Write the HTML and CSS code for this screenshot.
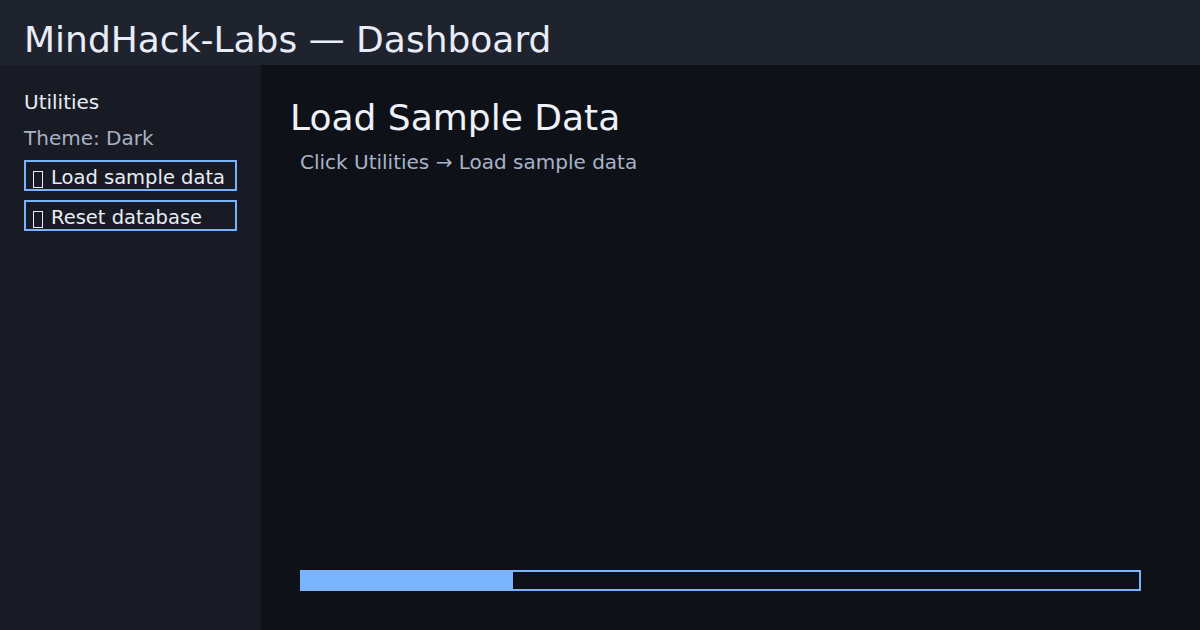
FILE: index.html
```html
<!DOCTYPE html>
<html lang="en">
<head>
<meta charset="utf-8">
<title>MindHack-Labs — Dashboard</title>
<link rel="stylesheet" href="styles.css">
</head>
<body>
<header class="topbar">
  <h1 class="brand">MindHack-Labs — Dashboard</h1>
</header>
<div class="layout">
  <aside class="sidebar">
    <div class="side-title">Utilities</div>
    <div class="side-meta">Theme: Dark</div>
    <button class="side-btn"><span class="glyph-box" aria-hidden="true"></span>Load sample data</button>
    <button class="side-btn"><span class="glyph-box" aria-hidden="true"></span>Reset database</button>
  </aside>
  <main class="content">
    <h2 class="page-title">Load Sample Data</h2>
    <p class="hint">Click Utilities → Load sample data</p>
    <div class="progress"><div class="progress-fill" style="width: 25.5%"></div></div>
  </main>
</div>
</body>
</html>
```

FILE: styles.css
```css
* { box-sizing: border-box; }
html, body {
  margin: 0;
  height: 100%;
}
body {
  font-family: "DejaVu Sans", sans-serif;
  background: #0e1118;
  color: #e8ecf5;
  display: flex;
  flex-direction: column;
  overflow: hidden;
}
.topbar {
  height: 65px;
  background: #1f232e;
  padding: 0 24px;
  display: flex;
  align-items: center;
  flex: none;
}
.brand {
  margin: 0;
  font-weight: normal;
  font-size: 36px;
  color: #e8ecf7;
  line-height: 1;
  padding-top: 14px;
}
.layout {
  flex: 1;
  display: flex;
  min-height: 0;
}
.sidebar {
  width: 261px;
  flex: none;
  background: #181b23;
  padding: 24px 24px 0;
  display: flex;
  flex-direction: column;
  align-items: flex-start;
}
.side-title {
  font-size: 20px;
  color: #e8ecf5;
  line-height: 26px;
}
.side-meta {
  font-size: 20px;
  color: #a9b1c4;
  line-height: 26px;
  margin-top: 10px;
}
.side-btn {
  font-family: inherit;
  font-size: 19.5px;
  color: #e8ecf5;
  background: transparent;
  border: 2px solid #79b3ff;
  width: 213px;
  height: 31px;
  padding: 3px 0 0 6px;
  display: flex;
  align-items: flex-start;
  text-align: left;
  line-height: 26px;
  white-space: nowrap;
  overflow: hidden;
  margin-top: 9px;
}
.side-btn + .side-btn { margin-top: 9px; }
.glyph-box {
  display: inline-block;
  flex: none;
  width: 10px;
  height: 17px;
  border: 1px solid #e8ecf5;
  margin: 6px 8px 0 1px;
}
.content {
  flex: 1;
  display: flex;
  flex-direction: column;
  padding: 24px 59px 39px 29px;
}
.page-title {
  margin: 8px 0 0;
  font-weight: normal;
  font-size: 36px;
  line-height: 42px;
  color: #eef1f8;
}
.hint {
  margin: 10px 0 0 10px;
  font-size: 20px;
  line-height: 26px;
  color: #a9b3c8;
}
.progress {
  margin-top: auto;
  margin-left: 10px;
  height: 21px;
  border: 2px solid #79b3ff;
  background: #0e1118;
}
.progress-fill {
  background: #7ab4ff;
  margin: -2px 0 -2px -2px;
  height: calc(100% + 4px);
}
```
